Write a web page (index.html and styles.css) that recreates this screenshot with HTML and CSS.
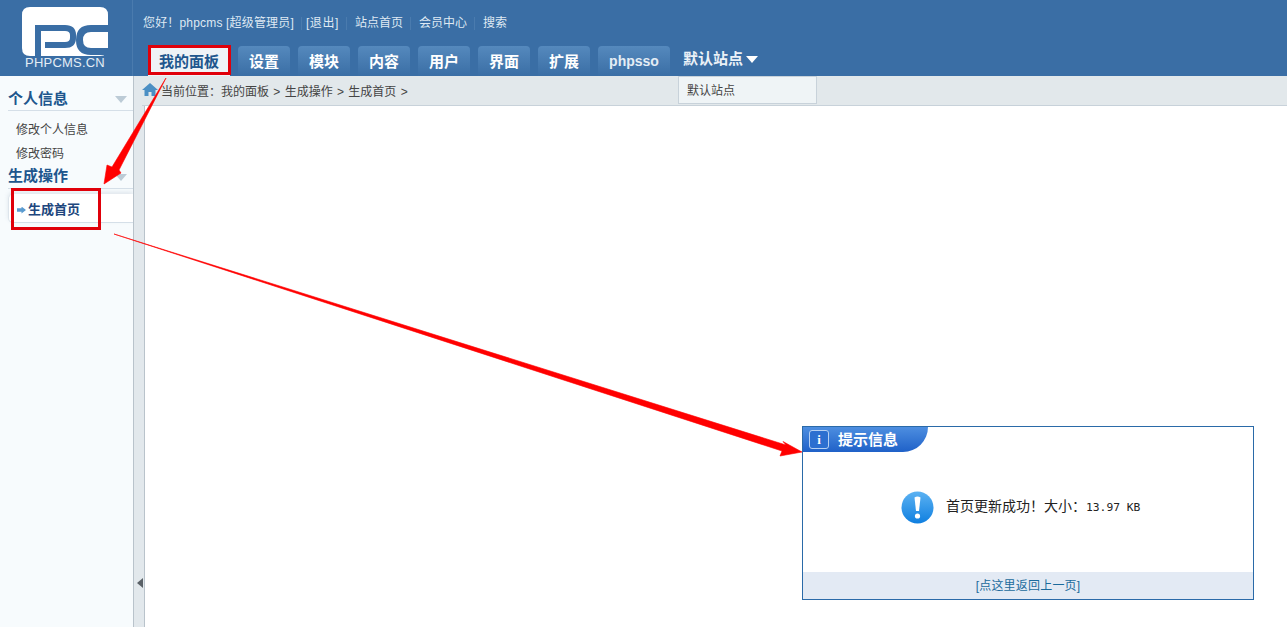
FILE: index.html
```html
<!DOCTYPE html>
<html lang="zh-CN">
<head>
<meta charset="utf-8">
<title>phpcms</title>
<link rel="stylesheet" href="styles.css">
</head>
<body>
<header class="header">
  <div class="logo">
    <svg class="logo-mark" width="86" height="49" viewBox="0 0 86 49">
      <path fill="#fff" d="M8 0H78Q86 0 86 8V41Q86 49 78 49H8Q0 49 0 41V8Q0 0 8 0Z"/>
      <path fill="none" stroke="#3a6ea5" stroke-width="6" d="M16 49V21H43Q51 21 51 28V31Q51 38 43 38H23"/>
      <path fill="none" stroke="#3a6ea5" stroke-width="7" d="M86 21.500H69Q57.500 21.500 57.500 33Q57.500 44.500 69 44.500H86"/>
    </svg>
    <div class="logo-text">PHPCMS.CN</div>
  </div>
  <div class="header-main">
    <nav class="toplinks">
      <span class="toplink toplink-user">您好！phpcms [超级管理员]</span>
      <span class="toplink toplink-exit">[退出]</span>
      <span class="toplink">站点首页</span>
      <span class="toplink">会员中心</span>
      <span class="toplink">搜索</span>
    </nav>
    <nav class="tabs">
      <a class="tab tab-active">我的面板</a>
      <a class="tab">设置</a>
      <a class="tab">模块</a>
      <a class="tab">内容</a>
      <a class="tab">用户</a>
      <a class="tab">界面</a>
      <a class="tab">扩展</a>
      <a class="tab tab-wide">phpsso</a>
      <a class="site-switch">默认站点<span class="caret"></span></a>
    </nav>
  </div>
</header>
<div class="body-row">
  <aside class="sidebar">
    <h3 class="side-title">个人信息<span class="side-arrow"></span></h3>
    <ul class="side-list">
      <li>修改个人信息</li>
      <li>修改密码</li>
    </ul>
    <h3 class="side-title side-title-second">生成操作<span class="side-arrow"></span></h3>
    <div class="side-current"><span class="side-bullet"></span>生成首页</div>
  </aside>
  <div class="splitter"><span class="splitter-arrow"></span></div>
  <main class="main">
    <div class="crumb">
      <svg class="home" width="16" height="13" viewBox="0 0 16 13"><path fill="#4b8fc4" d="M8 0 16 7H13.500V13H9.500V9H6.500V13H2.500V7H0Z"/></svg>
      <span>当前位置：我的面板 &gt; 生成操作 &gt; 生成首页 &gt;</span>
    </div>
    <div class="content">
      <section class="msg">
        <div class="msg-head">
          <span class="msg-i">i</span>提示信息
        </div>
        <div class="msg-body">
          <svg class="msg-icon" width="33" height="33" viewBox="0 0 33 33">
            <defs><linearGradient id="ball" x1="0" y1="0" x2="0" y2="1"><stop offset="0" stop-color="#5cb2f2"/><stop offset="1" stop-color="#0f7fe0"/></linearGradient></defs>
            <circle cx="16.500" cy="16.500" r="16" fill="url(#ball)"/>
            <path fill="#fff" d="M13.500 6.500Q16.500 4.500 19.500 6.500L18 20H15Z"/>
            <circle cx="16.500" cy="25" r="2.600" fill="#fff"/>
          </svg>
          <span class="msg-text">首页更新成功！大小：<span class="msg-size">13.97 KB</span></span>
        </div>
        <div class="msg-foot">[点这里返回上一页]</div>
      </section>
    </div>
  </main>
</div>
<div class="site-menu">默认站点</div>
<svg class="annot" width="1287" height="627" viewBox="0 0 1287 627">
  <rect class="annot-box" x="149.500" y="46.500" width="80" height="27"/>
  <rect class="annot-box" x="12.500" y="189.500" width="87" height="39"/>
  <path class="annot-arrow" d="M166 78 119 170 121 173 104 184 107 165 112 167Z"/>
  <path class="annot-arrow" d="M114 234 786 445 783 441.500 802 452 780 456 782 451Z"/>
</svg>
</body>
</html>
```

FILE: styles.css
```css
* { box-sizing: border-box; }
html, body { margin: 0; height: 100%; overflow: hidden; }
body {
  font: 12px/1.5 "Liberation Sans", "Noto Sans CJK SC", sans-serif;
  color: #444;
  background: #fff;
  display: flex;
  flex-direction: column;
}
.header {
  height: 76px;
  background: #3a6ea5;
  display: flex;
  flex: none;
}
.logo {
  width: 133px;
  flex: none;
  border-right: 1px solid #4a7bae;
  padding: 7px 0 0 22px;
}
.logo-mark { display: block; }
.logo-text {
  width: 86px;
  margin-top: 0;
  color: #e4edf5;
  font-size: 13px;
  line-height: 13px;
  letter-spacing: .2px;
  text-align: center;
  white-space: nowrap;
}
.header-main { flex: 1; padding-left: 10px; }
.toplinks {
  height: 46px;
  padding-top: 14px;
  display: flex;
  color: #dfe9f3;
  line-height: 18px;
}
.toplink { padding: 0 8px 0 0; margin-right: 8px; position: relative; }
.toplink::after {
  content: "";
  position: absolute;
  right: 0;
  top: 3px;
  height: 13px;
  border-right: 1px solid #4a7bae;
}
.toplink:last-child::after { display: none; }
.toplink-user { letter-spacing: .17px; margin-right: 4px; }
.toplink-exit { letter-spacing: .6px; }
.tabs { display: flex; align-items: flex-end; height: 30px; gap: 8px; padding-left: 5px; }
.tab {
  width: 52px;
  height: 30px;
  border-radius: 4px 4px 0 0;
  background: linear-gradient(#5589bd, #3a6ea5);
  color: #fff;
  font-size: 15px;
  font-weight: bold;
  line-height: 31px;
  text-align: center;
}
.tab-active {
  width: 82px;
  background: #eff3f6;
  color: #20568d;
}
.tab-wide { width: 72px; font-size: 14px; color: #e4edf5; }
.site-switch {
  margin-left: 5px;
  color: #eaf1f7;
  font-size: 15px;
  font-weight: bold;
  line-height: 28px;
  height: 30px;
  display: flex;
  align-items: center;
  padding-bottom: 4px;
}
.caret {
  width: 0;
  height: 0;
  margin-left: 3px;
  border: 6px solid transparent;
  border-top: 7px solid #fff;
  border-bottom: 0;
}
.body-row { flex: 1; display: flex; min-height: 0; }
.sidebar {
  width: 133px;
  flex: none;
  background: #f7fbfd;
}
.side-title {
  margin: 0 0 0 8px;
  height: 35px;
  padding-top: 12px;
  border-bottom: 1px solid #d5dfe8;
  color: #20568d;
  font-size: 15px;
  font-weight: bold;
  line-height: 22px;
  position: relative;
}
.side-title-second { height: 23px; padding-top: 0; line-height: 20px; }
.side-arrow {
  position: absolute;
  right: 6px;
  top: 20px;
  border: 6px solid transparent;
  border-top: 7px solid #bccbd6;
  border-bottom: 0;
}
.side-title-second .side-arrow { top: 8px; }
.side-list { list-style: none; margin: 0; padding: 7px 0 0 16px; }
.side-list li { height: 24px; line-height: 24px; color: #444; }
.side-current {
  margin: 5px 0 0 8px;
  height: 29px;
  padding: 4px 0 0 8px;
  background: #fff;
  border-bottom: 1px solid #d5dfe8;
  border-left: 1px solid #dde5ec;
  border-radius: 5px 0 0 5px;
  box-shadow: 0 -2px 4px rgba(120, 140, 160, .18);
  color: #20467d;
  font-size: 13px;
  font-weight: bold;
  display: flex;
  align-items: center;
}
.side-bullet {
  width: 9px;
  height: 7px;
  margin-right: 2px;
  background: #5a9bd0;
  clip-path: polygon(0 25%, 50% 25%, 50% 0, 100% 50%, 50% 100%, 50% 75%, 0 75%);
}
.splitter {
  width: 12px;
  flex: none;
  background: #e2e8ec;
  border-left: 1px solid #b9c3cb;
  border-right: 1px solid #b9c3cb;
  display: flex;
  align-items: flex-end;
  padding: 0 0 39px 3px;
}
.splitter-arrow {
  border: 5px solid transparent;
  border-right: 6px solid #5a6167;
  border-left: 0;
}
.main { flex: 1; display: flex; flex-direction: column; min-width: 0; }
.crumb {
  height: 30px;
  flex: none;
  margin-left: -3px;
  background: #e2e8eb;
  border-bottom: 1px solid #c8d2da;
  display: flex;
  align-items: center;
  padding: 3px 0 0 0;
  color: #444;
  line-height: 26px;
  word-spacing: 1px;
}
.home { margin: -5px 3px 0 0; }
.content {
  flex: 1;
  display: flex;
  justify-content: flex-end;
  align-items: flex-start;
  padding: 320px 33px 0 0;
}
.msg {
  width: 452px;
  height: 174px;
  border: 1px solid #2a6aa8;
  background: #fff;
  display: flex;
  flex-direction: column;
}
.msg-head {
  width: 125px;
  height: 25px;
  background: linear-gradient(#4d8ee0, #1f61c8);
  border-radius: 0 0 25px 0;
  color: #fff;
  font-size: 15px;
  font-weight: bold;
  line-height: 26px;
  display: flex;
  align-items: center;
  padding-left: 6px;
}
.msg-i {
  width: 20px;
  height: 19px;
  margin-right: 9px;
  border: 1px solid #b5d0f2;
  border-radius: 3px;
  background: #2c6fd0;
  font: bold 13px/17px "Liberation Serif", serif;
  text-align: center;
}
.msg-body {
  flex: 1;
  display: flex;
  align-items: center;
  padding: 0 0 9px 98px;
}
.msg-icon { margin-right: 12px; flex: none; }
.msg-text {
  color: #222;
  font-family: "Noto Sans CJK SC", sans-serif;
  font-size: 14px;
  margin-top: -3px;
}
.msg-size { font-family: "DejaVu Sans Mono", monospace; font-size: 11.300px; }
.msg-foot {
  height: 27px;
  background: #e3eaf4;
  color: #1b6a9c;
  line-height: 28px;
  letter-spacing: .2px;
  text-align: center;
}
.site-menu {
  position: absolute;
  left: 678px;
  top: 76px;
  width: 139px;
  height: 28px;
  padding: 1px 0 0 8px;
  background: #eff4f6;
  border: 1px solid #c8d2da;
  color: #444;
  line-height: 26px;
}
.annot { position: absolute; left: 0; top: 0; pointer-events: none; }
.annot-box { fill: none; stroke: #e0000a; stroke-width: 3; }
.annot-arrow { fill: #f00; stroke: #f00; stroke-width: .6; }
```
